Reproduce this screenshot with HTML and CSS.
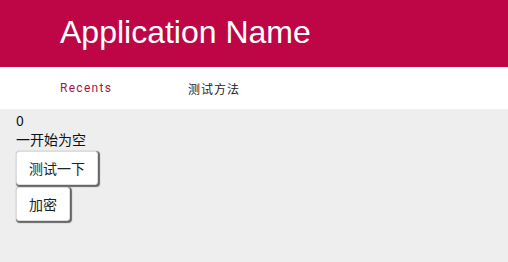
FILE: index.html
```html
<!DOCTYPE html>
<html>

<head>
    <title>Application Name</title>
    <meta charset="utf-8">
    <meta name="viewport" content="width=device-width, initial-scale=1.0">
    <link rel="stylesheet" href="styles.css">
</head>

<body>

    <header>
        <h1>Application Name</h1>
    </header>

    <nav>
        <a class="valgt">Recents</a>
        <a>测试方法</a>
    </nav>

    <main>
        <p class="tal">0</p>
        <p class="besked">一开始为空</p>
        <button class="foerste">测试一下</button>
        <button>加密</button>
    </main>

</body>

</html>
```

FILE: styles.css
```css
body {
    margin: 0;
    font-family: "Liberation Sans", "Noto Sans CJK SC", sans-serif;
    background: #eeeeee;
    height: 262px;
}

header {
    background: #be0646;
    height: 67px;
    padding-left: 60px;
    box-sizing: border-box;
}

h1 {
    margin: 0;
    color: white;
    font-weight: normal;
    font-size: 32px;
    line-height: 64px;
}

nav {
    background: white;
    height: 42px;
    padding-left: 60px;
    display: flex;
    align-items: center;
}

nav a {
    font-size: 12px;
    color: #222;
    width: 128px;
    font-family: "Noto Sans CJK SC", sans-serif;
    letter-spacing: 1px;
}

nav .valgt {
    color: #a01646;
    font-family: Roboto, sans-serif;
    letter-spacing: 1.3px;
}

main {
    padding: 2px 16px;
    font-family: "Noto Sans CJK SC", sans-serif;
    font-size: 14px;
    color: #111;
}

p {
    margin: 0;
    line-height: 19px;
}

button {
    display: block;
    font-family: "Noto Sans CJK SC", sans-serif;
    font-size: 14px;
    color: #222;
    background: white;
    border: 1px solid #ddd;
    border-radius: 3px;
    box-shadow: 1px 1px 1px 1px #666;
    padding: 6px 12px;
    margin-bottom: 2px;
    line-height: 20px;
}

.foerste {
    margin-top: 2px;
}
```
